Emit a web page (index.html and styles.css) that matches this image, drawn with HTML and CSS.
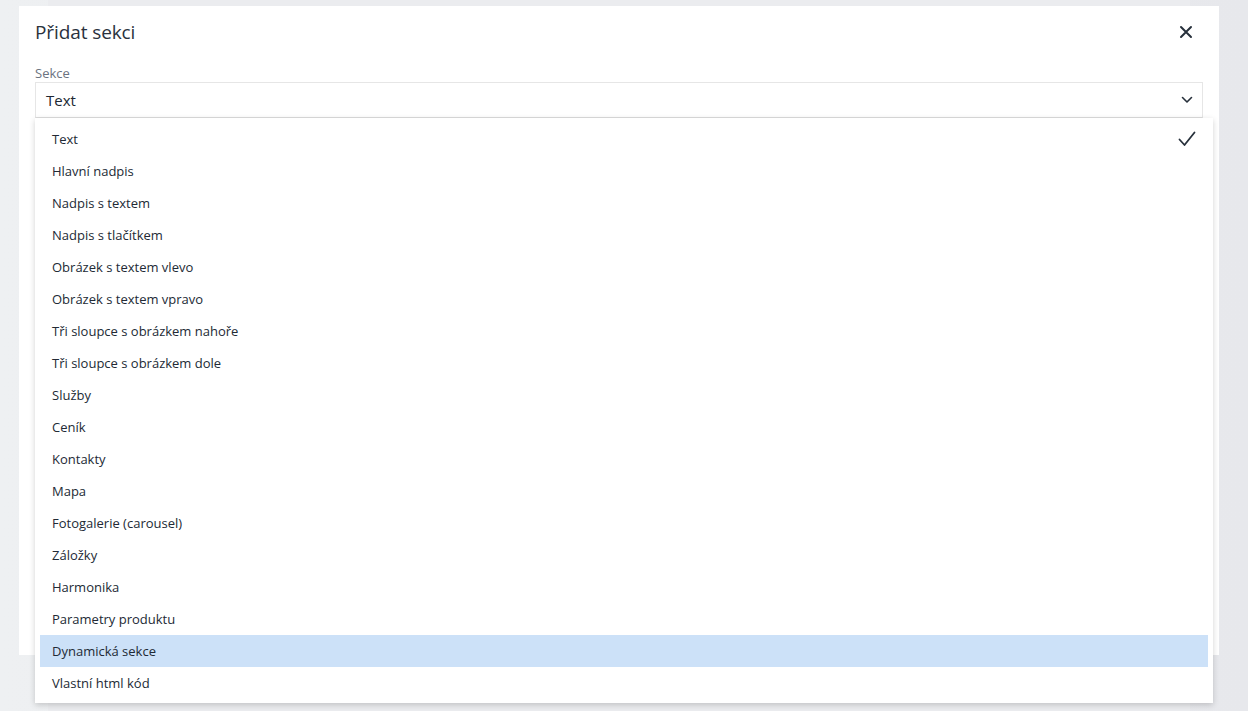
FILE: index.html
```html
<!DOCTYPE html>
<html lang="cs">
<head>
  <meta charset="UTF-8" />
  <meta name="viewport" content="width=device-width, initial-scale=1.0"/>
  <title>Přidat sekci</title>
  <link rel="stylesheet" href="styles.css">
</head>
<body>
  <div class="page">
    <div class="column"></div>
  </div>

  <div class="modal">
    <div class="modal-header">
      <h1>Přidat sekci</h1>
      <button class="close" aria-label="Zavřít">
        <svg width="14" height="14" viewBox="0 0 14 14"><path d="M2 2 L12 12 M12 2 L2 12" stroke="#27303b" stroke-width="2" stroke-linecap="round"/></svg>
      </button>
    </div>

    <div class="field">
      <label>Sekce</label>
      <div class="select">
        <span>Text</span>
        <svg width="12" height="8" viewBox="0 0 12 8"><path d="M1.5 1.5 L6 6 L10.5 1.5" fill="none" stroke="#27303b" stroke-width="1.6" stroke-linecap="round" stroke-linejoin="round"/></svg>
      </div>

      <ul class="options">
        <li class="selected">Text
          <svg width="18" height="16" viewBox="0 0 18 16"><path d="M1.5 8.5 L6.5 14 L16.5 1.5" fill="none" stroke="#27303b" stroke-width="1.8" stroke-linecap="round" stroke-linejoin="round"/></svg>
        </li>
        <li>Hlavní nadpis</li>
        <li>Nadpis s textem</li>
        <li>Nadpis s tlačítkem</li>
        <li>Obrázek s textem vlevo</li>
        <li>Obrázek s textem vpravo</li>
        <li>Tři sloupce s obrázkem nahoře</li>
        <li>Tři sloupce s obrázkem dole</li>
        <li>Služby</li>
        <li>Ceník</li>
        <li>Kontakty</li>
        <li>Mapa</li>
        <li>Fotogalerie (carousel)</li>
        <li>Záložky</li>
        <li>Harmonika</li>
        <li>Parametry produktu</li>
        <li class="active">Dynamická sekce</li>
        <li>Vlastní html kód</li>
      </ul>
    </div>
  </div>
</body>
</html>
```

FILE: styles.css
```css
body {
  margin: 0;
  height: 711px;
  overflow: hidden;
  font-family: 'Open Sans', 'Noto Sans', sans-serif;
  background: #e9eaed;
  color: #27303b;
}

.page {
  height: 100%;
  padding: 0 58px 0 48px;
  background: linear-gradient(90deg, #eef0f2, #e7e8ec);
}

.column {
  height: 100%;
  background: #ebecef;
}

.modal {
  position: absolute;
  top: 6px;
  left: 19px;
  width: 1200px;
  height: 649px;
  background: #fff;
  box-sizing: border-box;
  padding: 0 16px;
}

.modal-header {
  display: flex;
  justify-content: space-between;
  align-items: center;
  height: 52px;
}

.modal-header h1 {
  margin: 0;
  font-size: 19px;
  font-weight: 400;
  color: #2a323d;
  letter-spacing: -0.1px;
}

.close {
  border: none;
  background: none;
  padding: 0;
  margin-right: 10px;
  display: flex;
}

.field {
  position: relative;
  margin-top: 6px;
}

.field label {
  display: block;
  font-size: 13px;
  color: #6b7380;
  line-height: 18px;
}

.select {
  display: flex;
  justify-content: space-between;
  align-items: center;
  height: 36px;
  width: 1168px;
  box-sizing: border-box;
  border: 1px solid #e6e6e6;
  border-bottom-color: #dcdcdc;
  padding: 0 9px 0 10px;
  font-size: 15px;
  color: #202833;
}

.options {
  position: absolute;
  top: 54px;
  left: 0;
  width: 1178px;
  margin: 0;
  padding: 5px 5px 4px;
  box-sizing: border-box;
  list-style: none;
  background: #fff;
  box-shadow: 0 2px 6px rgba(0,0,0,0.18);
}

.options li {
  display: flex;
  justify-content: space-between;
  align-items: center;
  height: 32px;
  padding: 0 12px 0 12px;
  font-size: 13px;
  color: #222a35;
}

.options li.active {
  background: #cce1f8;
}
```
